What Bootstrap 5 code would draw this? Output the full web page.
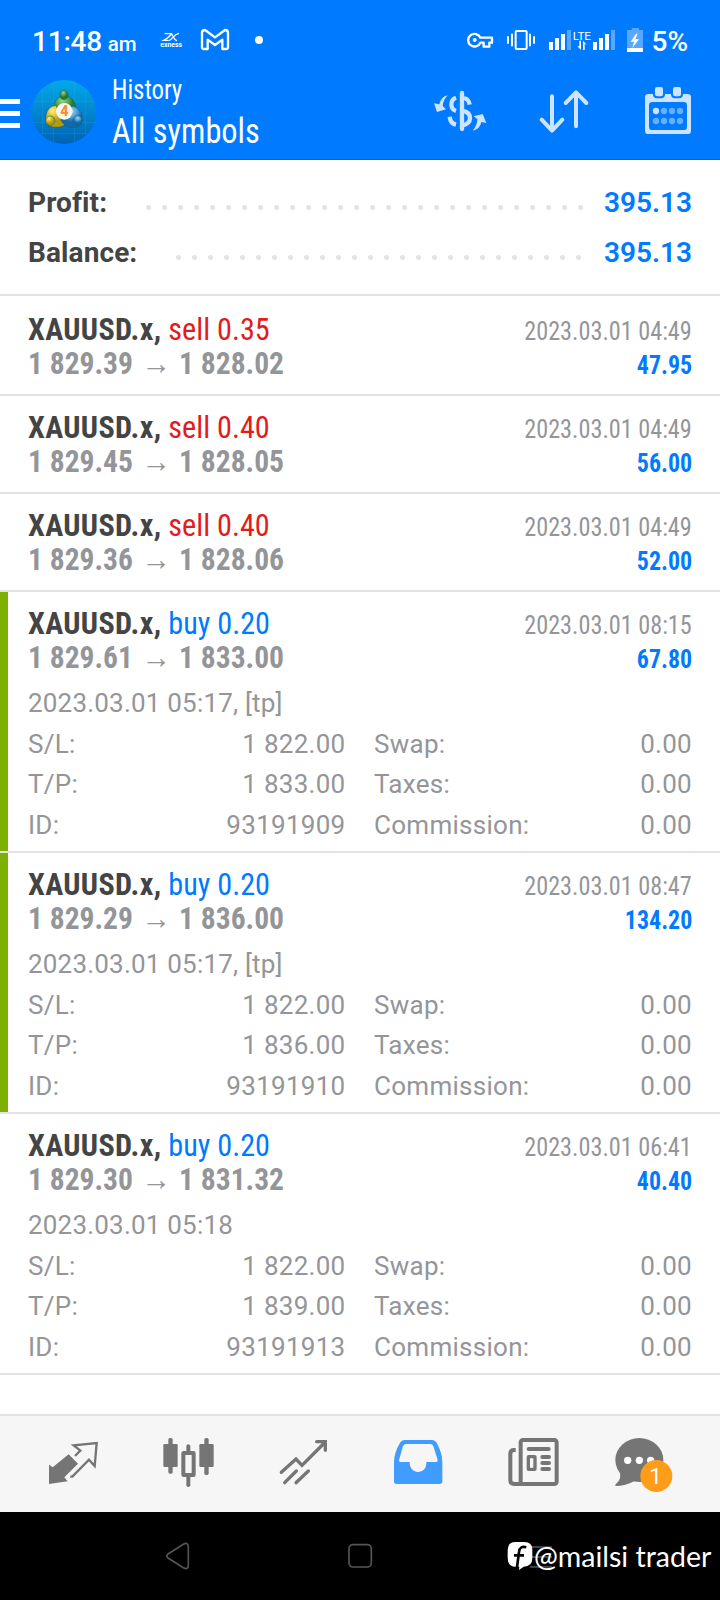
<!DOCTYPE html>
<html lang="en">
<head>
<meta charset="utf-8">
<meta name="viewport" content="width=device-width, initial-scale=1">
<title>History</title>
<link href="https://cdn.jsdelivr.net/npm/bootstrap@5.3.0/dist/css/bootstrap.min.css" rel="stylesheet">
<style>
body{font-family:Roboto,"Liberation Sans",sans-serif;width:720px;height:1600px;overflow:hidden;background:#fff;color:#444}
svg{display:block;flex:none}
.top-area{background:#007aff;height:160px;color:#fff;border-bottom:1px solid #0068d9}
.status-line{height:72px;padding:8px 32px 0 32px}
.status-line svg{margin-top:17px}
.clock{width:128px;font-size:28px;font-weight:500;line-height:67px;letter-spacing:-.2px}
.clock .ampm{font-size:20.5px;margin-left:-1px}
.pct{font-size:28px;font-weight:500;line-height:67px}
.app-line{height:88px;padding-right:22px}
.narrow{display:inline-block;font-family:"Roboto Condensed",Roboto,sans-serif;font-stretch:condensed;transform:scaleX(.943);transform-origin:left;white-space:nowrap}
.narrow-end{transform-origin:right}
.page-kind{font-size:27px;line-height:36px;transform:scaleX(.92)}
.page-name{font-size:35px;line-height:47px;transform:scaleX(.923)}
.totals{height:136px;padding:18px 28px 0;border-bottom:2px solid #e3e3e3;font-size:28px;line-height:50px;font-weight:600}
.totals .label{letter-spacing:.1px;font-weight:700}
.dots{height:5px;margin-top:9px;background:radial-gradient(circle at 2.5px 2.5px,#e3e3e3 2.1px,transparent 2.9px) 0 0/16px 5px repeat-x}
.blue{color:#007aff}.red{color:#e31b1b}
.deal{padding:14px 28px 0;border-bottom:2px solid #e3e3e3;position:relative;line-height:34px;height:98px}
.deal:first-child{padding-top:16px;height:100px}
.deal.open{height:261px}
.deal.marked::before{content:"";position:absolute;left:0;top:0;bottom:0;width:8px;background:#7db000}
.deal-line{height:34px}
.sym{font-size:32px}
.sym b{letter-spacing:.35px}
.price{font-size:32px;font-weight:700;color:#949599;transform:scaleX(.923)}
.arrow{width:50px;text-align:center;font-weight:400;font-size:32px}
.when{font-size:26px;color:#949599;transform:scaleX(.932)}
.gain{font-size:26px;font-weight:700;transform:scaleX(.92)}
.info{font-size:26px;line-height:40.5px;color:#949599;letter-spacing:.2px;margin-top:9px}
.info-grid{display:grid;grid-template-columns:317.5px 318px;column-gap:28.5px;letter-spacing:.28px}
.tabs{height:98px;margin-top:39px;background:#f6f6f6;border-top:2px solid #e3e3e3;padding:0 16px;color:#757575}
.sys{height:88px;background:#000;padding:0 87px;position:relative;color:#555}
.wm{position:absolute;left:507px;top:0;height:88px;color:#fff;font-family:Lato,sans-serif;font-size:28.5px;line-height:88px;white-space:nowrap}
</style>
</head>
<body>
<header class="top-area">
  <div class="status-line d-flex align-items-start justify-content-between">
    <div class="d-flex">
      <div class="clock text-nowrap">11:48 <span class="ampm">am</span></div>
      <svg style="margin-right:17px" width="23" height="30" viewBox="480 75 69 90" fill="none" stroke="#fff" stroke-width="4"><path d="M494 101h20q-3 8-23 20h14M513 101c7 4 8 20 18 21M537 100c-18 3-19 20-31 22"/><text x="481" y="141" font-size="21" font-weight="700" fill="#fff" stroke="none" textLength="65" lengthAdjust="spacingAndGlyphs">exness</text></svg>
      <svg style="margin-right:25px" width="30" height="30" viewBox="600 75 90 90" fill="none" stroke="#fff" stroke-width="7" stroke-linejoin="round"><path d="M606 142V98q0-8 9-8l30 22 30-22q9 0 9 8v44q0 5-5 5h-12v-28l-22 16-22-16v28h-12q-5 0-5-5z"/></svg>
      <svg width="8" height="30" viewBox="765 75 24 90"><circle cx="777" cy="120" r="12" fill="#fff"/></svg>
    </div>
    <div class="d-flex">
      <svg style="margin-right:12px" width="28" height="30" viewBox="318 75 84 90" fill="none" stroke="#fff" stroke-width="7"><path d="M361 113a19 19 0 1 0 0 15h10v12h17v-12h8v-15z" stroke-linejoin="round"/><circle cx="344" cy="120" r="6" fill="#fff" stroke="none"/></svg>
      <svg style="margin-right:12px" width="30" height="30" viewBox="438 75 90 90" fill="none" stroke="#fff" stroke-width="6"><rect x="467" y="93" width="33" height="54" rx="3"/><path d="M444 109v22M456 101v38M510 101v38M522 109v22"/></svg>
      <svg style="margin-right:10px" width="68" height="30" viewBox="564 75 204 90" fill="#fff"><path d="M567 126h12v24h-12zM585 114h12v36h-12zM603 102h12v48h-12zM699 126h12v24h-12zM717 114h12v36h-12zM735 102h12v48h-12z"/><path d="M621 90h12v60h-12zM753 90h12v60h-12z" opacity=".35"/><text x="638" y="120" font-size="34" textLength="55" lengthAdjust="spacingAndGlyphs">LTE</text><path d="M658 122h5v28l-11-11h6zM669 150v-28l10 11h-5v17z"/></svg>
      <svg style="margin-right:7px" width="18" height="30" viewBox="798 75 54 90" fill="#fff"><path d="M801 90h14v-6h22v6h12v54h-48z" opacity=".35"/><path d="M801 144h48v12h-48zM828 101l-16 24h10l-5 19 20-26h-11l7-17z"/></svg>
      <div class="pct">5%</div>
    </div>
  </div>
  <div class="app-line d-flex">
    <svg width="20" height="80" viewBox="0 0 20 80" fill="#fff"><path d="M0 27h20v5H0zM0 39h20v5H0zM0 51h20v5H0z"/></svg>
    <svg style="margin:8px 16px 0 12px" width="64" height="64" viewBox="12 12 192 192">
      <defs>
        <linearGradient id="sky" x2="0" y2="1"><stop stop-color="#02a9e8"/><stop offset="1" stop-color="#0063b5"/></linearGradient>
        <radialGradient id="gr" cx=".4" cy=".25"><stop stop-color="#9bd582"/><stop offset="1" stop-color="#217a2c"/></radialGradient>
        <radialGradient id="ye" cx=".35" cy=".25"><stop stop-color="#fff176"/><stop offset="1" stop-color="#b59b10"/></radialGradient>
        <radialGradient id="bl" cx=".5" cy=".25"><stop stop-color="#9adcff"/><stop offset="1" stop-color="#1169ae"/></radialGradient>
      </defs>
      <circle cx="108" cy="108" r="96" fill="url(#sky)"/>
      <path d="M76 18v180M140 18v180M172 40v136M44 40v136M18 76h180M14 140h188M40 172h136" stroke="#5cc4f0" stroke-opacity=".25" stroke-width="2"/>
      <g stroke="#1c5a50" stroke-width="1.5">
        <path d="M77 102c-2-24 12-42 32-42s38 18 33 44q-4 10-12 12l-40-8z" fill="url(#gr)"/>
        <path d="M84 88q-26 4-30 30c-3 20 2 32 20 35 20 2 30 0 38-8l-10-14z" fill="url(#ye)"/>
        <path d="M134 90q22 6 28 30c2 20-4 32-22 34-20 2-30-4-42-22z" fill="url(#bl)"/>
        <ellipse cx="108" cy="57" rx="12" ry="14" fill="url(#gr)"/>
        <circle cx="67" cy="134" r="14" fill="url(#ye)"/>
        <circle cx="149" cy="133" r="14" fill="url(#bl)"/>
      </g>
      <circle cx="109" cy="106" r="25" fill="#f7f5f0"/>
      <text x="109" y="121" text-anchor="middle" font-size="43" font-weight="800" fill="#f98b32">4</text>
    </svg>
    <div class="flex-grow-1 d-flex flex-column align-items-start">
      <div class="narrow page-kind">History</div>
      <div class="narrow page-name">All symbols</div>
    </div>
    <div class="d-flex" style="gap:44px;padding-top:10px">
      <svg width="60" height="60" viewBox="210 246 180 180" fill="none" stroke="#cce4ff" stroke-width="13"><path d="M306 279v108" stroke-linecap="round"/><path d="M288 293q-14 5-14 20 0 15 14 20M269 350q2 20 19 24M312 294q14 3 17 20M306 332q25 4 24 24-1 15-21 20"/><path d="M263 286q-20 4-25 27l-16-3 9 26 27-8-10-10q1-17 15-32zM338 392q22-4 26-26l15 3-11-27-27 7 11 8q0 19-14 35z" fill="#cce4ff" stroke="none"/></svg>
      <svg width="60" height="60" viewBox="522 246 180 180" fill="none" stroke="#cce4ff" stroke-width="12" stroke-linecap="round" stroke-linejoin="round"><path d="M576 289v102M545 359l31 33 31-33M648 379V278M617 309l31-32 31 32"/></svg>
      <svg width="60" height="60" viewBox="834 246 180 180" fill="#cce4ff"><path fill-rule="evenodd" d="M865 282h118q10 0 10 10v100q0 10-10 10H865q-10 0-10-10V292q0-10 10-10zm12 24q-10 0-10 10v64q0 10 10 10h94q10 0 10-10v-64q0-10-10-10z"/><g stroke="#007aff" stroke-width="6"><rect x="882" y="258" width="30" height="34" rx="9"/><rect x="936" y="258" width="30" height="34" rx="9"/></g><circle cx="888" cy="333" r="9.5"/><g opacity=".5"><circle cx="912" cy="333" r="9.5"/><circle cx="936" cy="333" r="9.5"/><circle cx="960" cy="333" r="9.5"/><circle cx="888" cy="363" r="9.5"/><circle cx="912" cy="363" r="9.5"/><circle cx="936" cy="363" r="9.5"/><circle cx="960" cy="363" r="9.5"/></g></svg>
    </div>
  </div>
</header>

<section class="totals">
  <div class="d-flex align-items-center"><div class="label" style="width:118px">Profit:</div><div class="dots" style="width:438px"></div><div class="blue ms-auto">395.13</div></div>
  <div class="d-flex align-items-center"><div class="label" style="width:148px">Balance:</div><div class="dots" style="width:406px"></div><div class="blue ms-auto">395.13</div></div>
</section>

<main id="deals"></main>

<nav class="tabs d-flex align-items-center">
  <div class="flex-fill d-flex justify-content-center"><svg width="60" height="60" viewBox="130 222 180 180" fill="none" stroke="currentColor" stroke-width="7"><path d="M148 314l11 8 48-39 28 28-41 41 10 12-56 8z" fill="currentColor" stroke="none"/><path d="M212 350h6l50-51 17 19 6-69-69 7 20 16-16 16"/></svg></div>
  <div class="flex-fill d-flex justify-content-center"><svg width="60" height="60" viewBox="474 222 180 180" fill="currentColor"><rect x="490" y="252" width="43" height="69" rx="4"/><rect x="598" y="252" width="43" height="69" rx="4"/><rect x="505" y="234" width="13" height="107" rx="5"/><rect x="613" y="234" width="13" height="111" rx="5"/><rect x="550" y="279" width="31" height="66" rx="1" fill="none" stroke="currentColor" stroke-width="12"/><path d="M559 257q6-8 12 0v18h-12zM559 347h12v30q-6 8-12 0z"/></svg></div>
  <div class="flex-fill d-flex justify-content-center"><svg width="60" height="60" viewBox="818 222 180 180" fill="none" stroke="currentColor" stroke-width="10" stroke-linecap="round"><path d="M843 337l44-40 18 19 70-70M949 245h26v26M853 368l35-35M887 368l37-35"/></svg></div>
  <div class="flex-fill d-flex justify-content-center"><svg width="60" height="60" viewBox="82 222 180 180" fill="#409cff"><path fill-rule="evenodd" d="M134 240h84q8 0 13 8 17 32 17 57v59q0 8-8 8H111q-8 0-8-8v-59q0-25 18-57 5-8 13-8zm5 12q-6 0-9 6l-12 42q-1 6 5 6h27c-2 40 53 40 50 0h29q6 0 5-6l-13-42q-3-6-9-6z"/></svg></div>
  <div class="flex-fill d-flex justify-content-center"><svg width="60" height="60" viewBox="426 222 180 180" fill="none" stroke="currentColor" stroke-width="12"><rect x="482" y="240" width="108" height="132" rx="7"/><path d="M467 270h-5q-11 0-11 11v80q0 11 12 11h22"/><rect x="505" y="290" width="20" height="38" rx="1" stroke-width="10"/><path d="M506 267h60M547 291h20M547 309h20M547 327h20" stroke-linecap="round"/></svg></div>
  <div class="flex-fill d-flex justify-content-center"><svg width="60" height="60" viewBox="770 222 180 180" overflow="visible" fill="currentColor"><ellipse cx="837" cy="300" rx="72" ry="66"/><path d="M776 330q12 26-11 44v4q32 0 56-14z"/><g fill="#fff"><circle cx="802" cy="301" r="11"/><circle cx="837" cy="301" r="11"/><circle cx="871" cy="301" r="11"/></g><circle cx="888" cy="348" r="48" fill="#ff9c1a"/><text x="886" y="372" text-anchor="middle" font-size="68" fill="#fff">1</text></svg></div>
</nav>
<footer class="sys d-flex align-items-center">
  <div class="flex-fill d-flex justify-content-center"><svg width="40" height="40" viewBox="474 528 120 120" fill="none" stroke="currentColor" stroke-width="5"><path d="M504 582l46-29q15-8 15 8v54q0 16-15 8l-46-29q-7-6 0-12z"/></svg></div>
  <div class="flex-fill d-flex justify-content-center"><svg width="40" height="40" viewBox="1020 528 120 120" fill="none" stroke="currentColor" stroke-width="5"><rect x="1047" y="554" width="67" height="67" rx="12"/></svg></div>
  <div class="flex-fill d-flex justify-content-center"><svg width="40" height="40" viewBox="486 528 120 120" fill="none" stroke="currentColor" stroke-width="5"><path d="M510 561h66M510 591h66M510 621h66"/></svg></div>
  <div class="wm d-flex align-items-center">
    <svg width="26" height="30" viewBox="441 549 78 90" style="margin-right:1px"><path d="M467 552h26q24 0 24 24v24q0 26-26 26l-14 10 1-10h-11q-24 0-24-26v-24q0-24 24-24z" fill="#fff"/><path d="M499 568q-20-6-22 14l-6 46M462 592h30" fill="none" stroke="#000" stroke-width="8"/></svg>
    <span>@mailsi trader</span>
  </div>
</footer>

<script>
const deals = [
  {side:'sell',vol:'0.35',from:'1 829.39',to:'1 828.02',when:'2023.03.01 04:49',gain:'47.95'},
  {side:'sell',vol:'0.40',from:'1 829.45',to:'1 828.05',when:'2023.03.01 04:49',gain:'56.00'},
  {side:'sell',vol:'0.40',from:'1 829.36',to:'1 828.06',when:'2023.03.01 04:49',gain:'52.00'},
  {side:'buy',vol:'0.20',from:'1 829.61',to:'1 833.00',when:'2023.03.01 08:15',gain:'67.80',opened:'2023.03.01 05:17, [tp]',tp:'1 833.00',id:'93191909',mark:1},
  {side:'buy',vol:'0.20',from:'1 829.29',to:'1 836.00',when:'2023.03.01 08:47',gain:'134.20',opened:'2023.03.01 05:17, [tp]',tp:'1 836.00',id:'93191910',mark:1},
  {side:'buy',vol:'0.20',from:'1 829.30',to:'1 831.32',when:'2023.03.01 06:41',gain:'40.40',opened:'2023.03.01 05:18',tp:'1 839.00',id:'93191913'}
];
const pair = (k, v) => `<div class="d-flex justify-content-between"><span>${k}</span><span>${v}</span></div>`;
document.getElementById('deals').innerHTML = deals.map(d => `
<article class="deal ${d.opened ? 'open' : ''} ${d.mark ? 'marked' : ''}">
  <div class="deal-line d-flex justify-content-between align-items-baseline"><div class="narrow sym"><b>XAUUSD.x,</b> <span class="${d.side === 'sell' ? 'red' : 'blue'}">${d.side} ${d.vol}</span></div><div class="narrow when narrow-end">${d.when}</div></div>
  <div class="deal-line d-flex justify-content-between align-items-baseline"><div class="narrow price d-flex"><span>${d.from}</span><span class="arrow">→</span><span>${d.to}</span></div><div class="narrow narrow-end gain blue">${d.gain}</div></div>
  ${d.opened ? `<div class="info"><div>${d.opened}</div><div class="info-grid">${pair('S/L:','1 822.00')}${pair('Swap:','0.00')}${pair('T/P:',d.tp)}${pair('Taxes:','0.00')}${pair('ID:',d.id)}${pair('Commission:','0.00')}</div></div>` : ''}
</article>`).join('');
</script>
<script src="https://cdn.jsdelivr.net/npm/bootstrap@5.3.0/dist/js/bootstrap.bundle.min.js"></script>
</body>
</html>
